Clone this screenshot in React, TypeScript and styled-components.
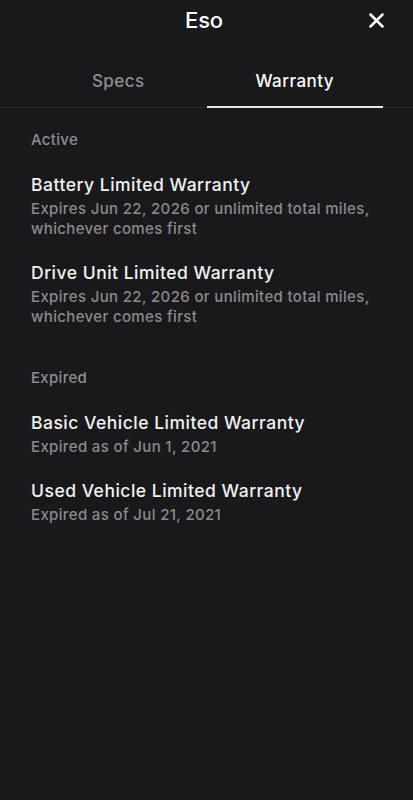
import React from "react";
import styled, { createGlobalStyle } from "styled-components";

const GlobalStyle = createGlobalStyle`
  html, body {
    margin: 0;
    padding: 0;
    background: #19191b;
  }
  body {
    font-family: Inter, "Noto Sans", sans-serif;
    -webkit-font-smoothing: antialiased;
  }
`;

const Page = styled.div`
  width: 413px;
  min-height: 800px;
  background: #19191b;
  color: #ffffff;
`;

const Header = styled.div`
  height: 40px;
  display: grid;
  grid-template-columns: 1fr auto 1fr;
  align-items: center;
  padding: 0 29px 0 24px;
`;

const Title = styled.h1`
  grid-column: 2;
  margin: 0;
  font-size: 22px;
  font-weight: 500;
  letter-spacing: -0.2px;
`;

const CloseButton = styled.button`
  grid-column: 3;
  justify-self: end;
  background: none;
  border: none;
  padding: 0;
  width: 16px;
  height: 16px;
  display: flex;
  align-items: center;
  justify-content: center;
  color: #fff;
`;

const Tabs = styled.div`
  display: flex;
  padding: 0 30px;
  border-bottom: 1px solid #2b2b2e;
  margin-top: 18px;
`;

const Tab = styled.div<{ active?: boolean }>`
  flex: 1;
  text-align: center;
  font-size: 17px;
  font-weight: 500;
  letter-spacing: 0.45px;
  color: ${(p) => (p.active ? "#ffffff" : "#8e8e91")};
  padding: 13px 0 15px;
  border-bottom: 2px solid ${(p) => (p.active ? "#e8e8e8" : "transparent")};
  margin-bottom: -1px;
`;

const Content = styled.div`
  padding: 22px 31px 0;
`;

const Section = styled.section`
  margin-bottom: 41px;
`;

const SectionLabel = styled.div`
  font-size: 15px;
  font-weight: 500;
  color: #8e8e91;
  line-height: 20px;
  letter-spacing: 0.3px;
  margin-bottom: 23px;
`;

const Item = styled.div`
  margin-bottom: 22px;
  &:last-child {
    margin-bottom: 0;
  }
`;

const ItemTitle = styled.div`
  font-size: 17.5px;
  font-weight: 500;
  line-height: 24px;
  letter-spacing: 0.5px;
  color: #f2f2f2;
  margin-bottom: 2px;
`;

const ItemText = styled.div`
  font-size: 15px;
  font-weight: 500;
  line-height: 20px;
  letter-spacing: 0.35px;
  color: #8a8a8d;
`;

const sections = [
  {
    label: "Active",
    items: [
      {
        title: "Battery Limited Warranty",
        text: "Expires Jun 22, 2026 or unlimited total miles, whichever comes first",
      },
      {
        title: "Drive Unit Limited Warranty",
        text: "Expires Jun 22, 2026 or unlimited total miles, whichever comes first",
      },
    ],
  },
  {
    label: "Expired",
    items: [
      { title: "Basic Vehicle Limited Warranty", text: "Expired as of Jun 1, 2021" },
      { title: "Used Vehicle Limited Warranty", text: "Expired as of Jul 21, 2021" },
    ],
  },
];

const App = () => {
  return (
    <Page>
      <GlobalStyle />
      <Header>
        <Title>Eso</Title>
        <CloseButton aria-label="Close">
          <svg width="15" height="15" viewBox="0 0 15 15">
            <path
              d="M1.5 1.5 L13.5 13.5 M13.5 1.5 L1.5 13.5"
              stroke="#fff"
              strokeWidth="2.5"
              strokeLinecap="round"
            />
          </svg>
        </CloseButton>
      </Header>
      <Tabs>
        <Tab>Specs</Tab>
        <Tab active>Warranty</Tab>
      </Tabs>
      <Content>
        {sections.map((s) => (
          <Section key={s.label}>
            <SectionLabel>{s.label}</SectionLabel>
            {s.items.map((it) => (
              <Item key={it.title}>
                <ItemTitle>{it.title}</ItemTitle>
                <ItemText>{it.text}</ItemText>
              </Item>
            ))}
          </Section>
        ))}
      </Content>
    </Page>
  );
};

export default App;
